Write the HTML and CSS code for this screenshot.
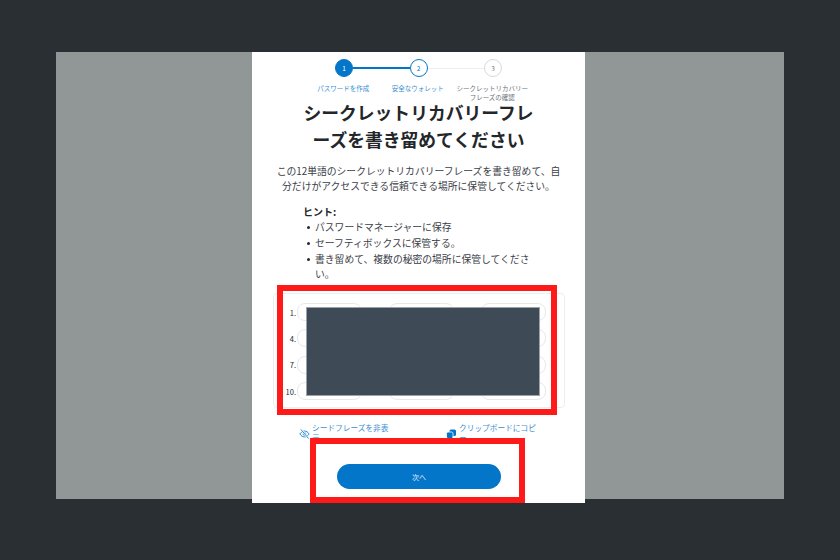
FILE: index.html
```html
<!DOCTYPE html>
<html lang="ja">
<head>
<meta charset="utf-8">
<title>シークレットリカバリーフレーズ</title>
<link rel="stylesheet" href="styles.css">
</head>
<body>
<div class="shot">
  <main class="card">
    <div class="stepper">
      <div class="track">
        <span class="dot dot-done">1</span>
        <span class="bar bar-on"></span>
        <span class="dot dot-now">2</span>
        <span class="bar"></span>
        <span class="dot">3</span>
      </div>
      <div class="labels">
        <span class="label label-on">パスワードを作成</span>
        <span class="label label-on">安全なウォレット</span>
        <span class="label">シークレットリカバリーフレーズの確認</span>
      </div>
    </div>
    <h1 class="title">シークレットリカバリーフレ<br>ーズを書き留めてください</h1>
    <p class="lead">この12単語のシークレットリカバリーフレーズを書き留めて、自分だけがアクセスできる信頼できる場所に保管してください。</p>
    <section class="tips">
      <h2 class="tips-title">ヒント:</h2>
      <ul class="tips-list">
        <li><span>パスワードマネージャーに保存</span></li>
        <li><span>セーフティボックスに保管する。</span></li>
        <li><span>書き留めて、複数の秘密の場所に保管してください。</span></li>
      </ul>
    </section>
    <div class="phrase">
      <div class="word"><span class="num">1.</span><span class="pill"></span></div>
      <div class="word"><span class="pill"></span></div>
      <div class="word"><span class="pill"></span></div>
      <div class="word"><span class="num">4.</span><span class="pill"></span></div>
      <div class="word"><span class="pill"></span></div>
      <div class="word"><span class="pill"></span></div>
      <div class="word"><span class="num">7.</span><span class="pill"></span></div>
      <div class="word"><span class="pill"></span></div>
      <div class="word"><span class="pill"></span></div>
      <div class="word"><span class="num">10.</span><span class="pill"></span></div>
      <div class="word"><span class="pill"></span></div>
      <div class="word"><span class="pill"></span></div>
    </div>
    <div class="actions">
      <a class="action action-hide">
        <svg class="icon" viewBox="0 0 12 12" aria-hidden="true"><path d="M1 6.500c1.400-2.200 3-3.200 5-3.200s3.600 1 5 3.200c-1.400 2.200-3 3.200-5 3.200s-3.600-1-5-3.200z" fill="none" stroke="#0376c9" stroke-width="0.900"/><circle cx="6" cy="6.500" r="1.500" fill="none" stroke="#0376c9" stroke-width="0.900"/><path d="M2 1.500l8.500 10" stroke="#fff" stroke-width="2.200"/><path d="M2 1.500l8.500 10" stroke="#0376c9" stroke-width="0.900"/></svg>
        <span class="action-text">シードフレーズを非表示</span>
      </a>
      <a class="action action-copy">
        <svg class="icon icon-copy" viewBox="0 0 10 10" aria-hidden="true"><rect x="3.500" y="0.500" width="6.500" height="6.500" rx="1.500" fill="#0376c9"/><rect x="0.500" y="3" width="6.500" height="6.500" rx="1.500" fill="#0376c9" stroke="#fff" stroke-width="0.800"/></svg>
        <span class="action-text">クリップボードにコピー</span>
      </a>
    </div>
    <button class="next" type="button">次へ</button>
    <div class="redact"></div>
    <div class="mark mark-phrase"></div>
    <div class="mark mark-next"></div>
  </main>
</div>
</body>
</html>
```
FILE: styles.css
```css
* { box-sizing: border-box; }
html, body { margin: 0; height: 100%; }
body {
  width: 840px;
  height: 560px;
  overflow: hidden;
  background: #2a2f33;
  padding: 52px 56px 61px;
  font-family: "Noto Sans CJK JP", "Liberation Sans", sans-serif;
  color: #24272a;
}
.shot {
  height: 447px;
  background: #919796;
  display: flex;
  justify-content: center;
}
.card {
  position: relative;
  width: 333px;
  height: 451px;
  margin-right: 3px;
  background: #fff;
  overflow: hidden;
  flex: none;
}
.stepper { padding: 7px 0 0 54px; width: 279px; }
.track { display: flex; align-items: center; padding-left: 29px; }
.dot {
  width: 18px;
  height: 18px;
  border-radius: 50%;
  border: 1px solid #d6d9dc;
  background: #fff;
  color: #6a737d;
  font-size: 6.500px;
  display: flex;
  align-items: center;
  justify-content: center;
  flex: none;
}
.dot-done { background: #0376c9; border-color: #0376c9; color: #fff; }
.dot-now { border-color: #0376c9; color: #0376c9; }
.bar { width: 56.500px; height: 1px; background: #eceef0; flex: none; }
.bar-on { height: 1.500px; background: #0376c9; }
.labels { display: flex; margin-top: 7px; }
.label {
  width: 74.500px;
  flex: none;
  text-align: center;
  font-size: 6.500px;
  line-height: 8.500px;
  color: #6a737d;
}
.label-on { color: #3b8fd1; }
.title {
  margin: -2px 0 0;
  font-size: 17.800px;
  line-height: 27px;
  font-weight: 700;
  text-align: center;
  color: #24272a;
}
.lead {
  margin: 11px 22px 0;
  font-size: 9.800px;
  line-height: 14.500px;
  text-align: center;
  color: #3b4046;
}
.tips { margin: 11px 52px 0 51px; font-size: 9.800px; }
.tips-title { margin: 0; font-size: 10px; line-height: 15px; font-weight: 700; }
.tips-list { margin: 1px 0 0; padding: 0; list-style: none; color: #3b4046; }
.tips-list li { display: flex; line-height: 14.500px; margin-bottom: 1.500px; }
.tips-list li::before {
  content: "";
  width: 3px;
  height: 3px;
  border-radius: 50%;
  background: #24272a;
  margin: 6px 5.500px 0 3.500px;
  flex: none;
}
.phrase {
  margin: 12px 20px 0 21px;
  height: 115px;
  border: 1px solid #eceef0;
  border-radius: 4px;
  padding: 5px 18px 0 0;
  display: grid;
  grid-template-columns: repeat(3, 92px);
  grid-auto-rows: 26.300px;
  justify-content: end;
}
.word { display: flex; align-items: center; justify-content: flex-end; }
.num { font-size: 7.500px; color: #24272a; padding-right: 1px; }
.pill {
  width: 65px;
  height: 18px;
  border: 1px solid #e6e8ea;
  border-radius: 8px;
  flex: none;
}
.actions { display: flex; margin-top: 15px; padding-left: 47px; }
.action { display: flex; align-items: flex-start; color: #3b8fd1; font-size: 7.700px; line-height: 10px; }
.action-hide { width: 147px; }
.action-text { width: 78px; }
.icon { width: 11px; height: 11px; margin-top: 5px; margin-right: 2px; flex: none; }
.icon-copy { width: 10px; height: 10px; margin-top: 6px; margin-right: 3px; }
.next {
  display: block;
  width: 164px;
  height: 25px;
  margin: 21px 0 0 85px;
  border: 0;
  border-radius: 13px;
  background: #0376c9;
  color: #e3eff8;
  font: 7px "Noto Sans CJK JP", "Liberation Sans", sans-serif;
}
.redact {
  position: absolute;
  left: 54px;
  top: 255px;
  width: 234px;
  height: 89px;
  background: #3e4a56;
  border: 1px solid #9aa2aa;
}
.mark { position: absolute; border: 6px solid #ff1a1a; }
.mark-phrase { left: 25px; top: 233px; width: 280px; height: 130px; }
.mark-next { left: 58px; top: 386px; width: 215px; height: 65px; }
```
